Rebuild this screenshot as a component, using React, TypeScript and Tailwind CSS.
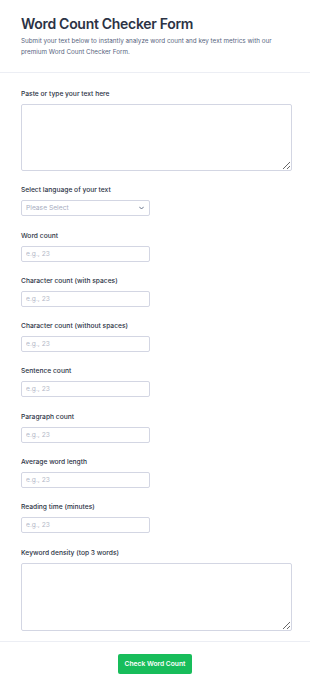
import { useState } from "react";

const numberFields = [
  "Word count",
  "Character count (with spaces)",
  "Character count (without spaces)",
  "Sentence count",
  "Paragraph count",
  "Average word length",
  "Reading time (minutes)",
];

const labelCls = "block text-[6.7px] leading-[10px] font-medium text-[#2c3345] mb-[5px]";
const boxCls =
  "block border border-[#d3d6e3] rounded-[2px] bg-white outline-none text-[6.7px] text-[#2c3345] placeholder:text-[#b4b9c8]";

const App = () => {
  const [lang, setLang] = useState("");

  return (
    <div className="w-[310px] min-h-[690px] bg-white font-[Inter,'Noto_Sans',sans-serif]">
      {/* header */}
      <div className="px-[21px] pt-[15px] pb-[14px] border-b border-[#eceef4]">
        <h1 className="text-[14px] leading-[18px] font-semibold text-[#2c3345] tracking-[-0.3px]">
          Word Count Checker Form
        </h1>
        <p className="mt-[3px] text-[6.3px] leading-[11px] text-[#57647e]">
          Submit your text below to instantly analyze word count and key text metrics with our premium Word Count
          Checker Form.
        </p>
      </div>

      {/* fields */}
      <div className="px-[21px] pt-[16px] pb-[10px] flex flex-col gap-[14.3px] border-b border-[#eceef4]">
        <div>
          <label className={labelCls}>Paste or type your text here</label>
          <textarea className={`${boxCls} w-[271px] h-[67px] p-[4px]`} />
        </div>

        <div>
          <label className={labelCls}>Select language of your text</label>
          <div className="relative w-[129px]">
            <select
              value={lang}
              onChange={(e) => setLang(e.target.value)}
              className={`${boxCls} appearance-none w-[129px] h-[16px] pl-[4px] text-[#a8aebf]`}
            >
              <option value="">Please Select</option>
              <option value="en">English</option>
              <option value="es">Spanish</option>
            </select>
            <svg
              className="absolute right-[6px] top-[6px] w-[5px] h-[4px] pointer-events-none"
              viewBox="0 0 10 6"
              fill="none"
            >
              <path d="M1 1l4 4 4-4" stroke="#57647e" strokeWidth="1.8" strokeLinecap="round" strokeLinejoin="round" />
            </svg>
          </div>
        </div>

        {numberFields.map((f) => (
          <div key={f}>
            <label className={labelCls}>{f}</label>
            <input type="text" placeholder="e.g., 23" className={`${boxCls} w-[129px] h-[16px] px-[4px]`} />
          </div>
        ))}

        <div>
          <label className={labelCls}>Keyword density (top 3 words)</label>
          <textarea className={`${boxCls} w-[271px] h-[68px] p-[4px]`} />
        </div>
      </div>

      {/* submit */}
      <div className="flex justify-center pt-[12px] pb-[16px]">
        <button
          type="button"
          className="w-[74px] h-[20px] rounded-[2px] bg-[#18bd5b] text-white text-[6.7px] font-semibold"
        >
          Check Word Count
        </button>
      </div>
    </div>
  );
};

export default App;
